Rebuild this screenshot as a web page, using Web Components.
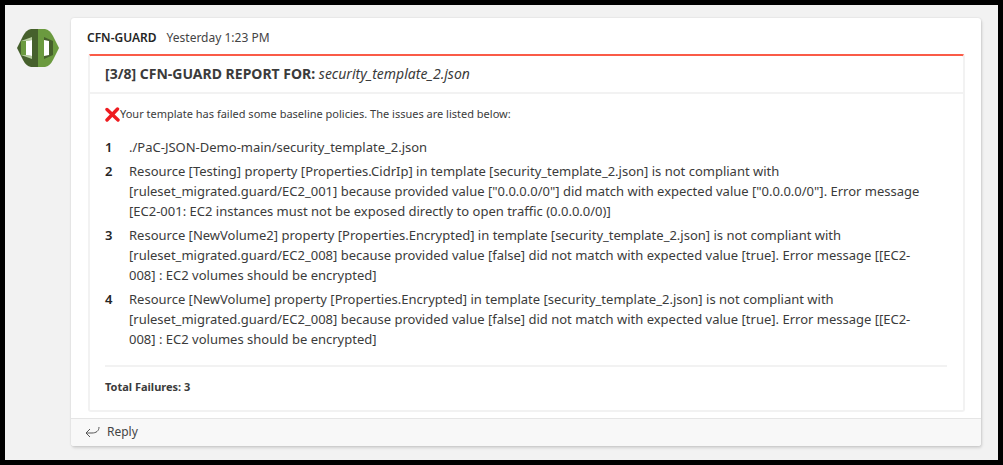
<!DOCTYPE html>
<html lang="en">
<head>
<meta charset="utf-8">
<meta name="viewport" content="width=device-width, initial-scale=1">
<title>CFN-GUARD report</title>
<style>
  html, body { margin: 0; min-height: 100vh; }
  body {
    box-sizing: border-box;
    border: 5px solid #000;
    background: #f2f2f2;
    color: #3b3b3b;
    font-family: "Noto Sans", "Open Sans", sans-serif;
    font-size: 13px;
    line-height: 20px;
  }
</style>
</head>
<body>
<chat-message sender="CFN-GUARD" time="Yesterday 1:23 PM">
  <guard-avatar slot="avatar"></guard-avatar>
  <report-card>
    <span slot="title">[3/8] CFN-GUARD REPORT FOR:</span>
    <span slot="file">security_template_2.json</span>
    <span slot="summary">Your template has failed some baseline policies. The issues are listed below:</span>
    <issue-row number="1">./PaC-JSON-Demo-main/security_template_2.json</issue-row>
    <issue-row number="2">Resource [Testing] property [Properties.CidrIp] in template [security_template_2.json] is not compliant with [ruleset_migrated.guard/EC2_001] because provided value ["0.0.0.0/0"] did match with expected value ["0.0.0.0/0"]. Error message [EC2-001: EC2 instances must not be exposed directly to open traffic (0.0.0.0/0)]</issue-row>
    <issue-row number="3">Resource [NewVolume2] property [Properties.Encrypted] in template [security_template_2.json] is not compliant with [ruleset_migrated.guard/EC2_008] because provided value [false] did not match with expected value [true]. Error message [[EC2-<wbr>008] : EC2 volumes should be encrypted]</issue-row>
    <issue-row number="4">Resource [NewVolume] property [Properties.Encrypted] in template [security_template_2.json] is not compliant with [ruleset_migrated.guard/EC2_008] because provided value [false] did not match with expected value [true]. Error message [[EC2-<wbr>008] : EC2 volumes should be encrypted]</issue-row>
    <span slot="total">Total Failures: 3</span>
  </report-card>
  <reply-bar slot="reply">Reply</reply-bar>
</chat-message>

<script>
class BaseElement extends HTMLElement {
  constructor() {
    super();
    this.attachShadow({ mode: 'open' }).innerHTML = this.constructor.markup;
  }
}

customElements.define('guard-avatar', class extends BaseElement {
  static markup = `
    <style>
      :host { display: block; width: 42px; height: 38px; }
      svg { display: block; width: 100%; height: 100%; }
    </style>
    <svg viewBox="0 0 42 38" aria-hidden="true">
      <path fill="#6b9a3f" d="M21 0H28Q33 1 36 7L42 19 36 31Q33 37 28 38H21Z"/>
      <path fill="#46602c" d="M21 0H14Q9 1 6 7L0 19 6 31Q9 37 14 38H21Z"/>
      <path fill="#6b9a3f" d="M4 12 9 11V27L4 26Z"/>
      <path fill="#b5cd9d" d="M4 12 15 8V11L9 12ZM4 26 15 30V27L9 26Z"/>
      <path fill="#46602c" d="M27 8 36 12V26L27 30Z"/>
      <path fill="#fff" d="M9 12 15 11V27L9 26ZM27 11 32 12V26L27 27Z"/>
    </svg>`;
});

customElements.define('chat-message', class extends BaseElement {
  static markup = `
    <style>
      :host { display: grid; grid-template-columns: 42px minmax(0, 1fr); gap: 12px; padding: 13px 17px 14px 12px; }
      .avatar { padding-top: 11px; }
      article { background: #fff; border-radius: 3px; box-shadow: 0 0 2px #0002, 1px 2px 3px #0002; }
      .body { padding: 10px 16px 6px 17px; }
      header { display: flex; gap: 10px; padding: 0 0 6px; margin-left: -1px; font-size: 12px; }
      strong { font-weight: 600; color: #252525; }
      time { color: #444; }
    </style>
    <div class="avatar"><slot name="avatar"></slot></div>
    <article>
      <div class="body">
        <header><strong></strong><time></time></header>
        <slot></slot>
      </div>
      <slot name="reply"></slot>
    </article>`;
  connectedCallback() {
    this.shadowRoot.querySelector('strong').textContent = this.getAttribute('sender');
    this.shadowRoot.querySelector('time').textContent = this.getAttribute('time');
  }
});

customElements.define('report-card', class extends BaseElement {
  static markup = `
    <style>
      :host { display: block; border: 2px solid #f2f2f2; border-top-color: #fa5b47; border-radius: 3px; }
      h1 { margin: 0; padding: 8px 15px; border-bottom: 2px solid #f2f2f2; font-size: 14px; font-weight: 700; }
      em { font-weight: 400; }
      .content { padding: 10px 16px 13px 15px; }
      .summary { display: flex; align-items: center; margin: 0; font-size: 11px; }
      .summary svg { width: 15px; height: 15px; flex: none; }
      .issues { display: grid; gap: 4px; margin: 13px 0 16px; }
      hr { margin: 0; border: 0; border-top: 2px solid #f2f2f2; }
      .total { margin: 10px 0 0; font-size: 11px; font-weight: 700; }
    </style>
    <h1><slot name="title"></slot> <em><slot name="file"></slot></em></h1>
    <div class="content">
      <p class="summary">
        <svg viewBox="0 0 15 15" aria-hidden="true"><path d="M2 2.5 13 13M12.5 2 2 13" stroke="#ee1c20" stroke-width="3.4" stroke-linecap="round"/></svg>
        <slot name="summary"></slot>
      </p>
      <div class="issues" role="list"><slot></slot></div>
      <hr>
      <p class="total"><slot name="total"></slot></p>
    </div>`;
});

customElements.define('issue-row', class extends BaseElement {
  static markup = `
    <style>
      :host { display: grid; grid-template-columns: 16px minmax(0, 1fr); gap: 8px; padding-right: 16px; }
      b { font-weight: 600; color: #252525; }
    </style>
    <b></b><div><slot></slot></div>`;
  connectedCallback() {
    this.setAttribute('role', 'listitem');
    this.shadowRoot.querySelector('b').textContent = this.getAttribute('number');
  }
});

customElements.define('reply-bar', class extends BaseElement {
  static markup = `
    <style>
      :host { display: block; background: #f8f8f8; border-top: 1px solid #e5e5e5; border-radius: 0 0 3px 3px; }
      button { display: flex; align-items: center; gap: 7px; width: 100%; padding: 3px 14px 4px; border: 0; background: none; color: #444; font: inherit; font-size: 12px; text-align: left; cursor: pointer; }
      svg { width: 15px; height: 12px; }
    </style>
    <button type="button">
      <svg viewBox="0 0 15 12" fill="none" stroke="#555" aria-hidden="true"><path d="M14 1C14 5 11 7 7 7H1M5 3 1 7 5 11"/></svg>
      <slot></slot>
    </button>`;
});
</script>
</body>
</html>
